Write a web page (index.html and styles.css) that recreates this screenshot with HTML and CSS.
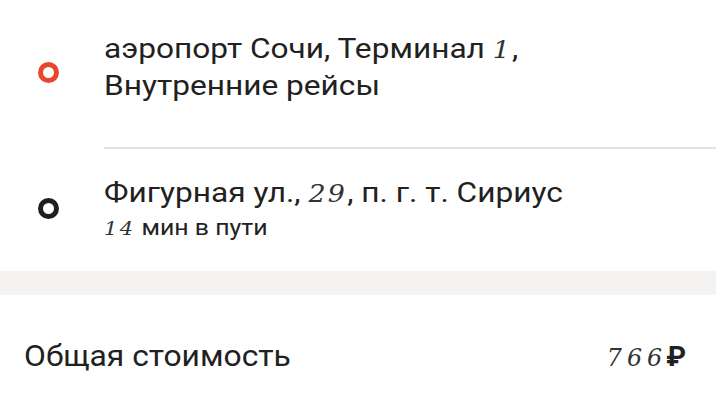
FILE: index.html
```html
<!DOCTYPE html>
<html lang="ru">
<head>
<meta charset="utf-8">
<link rel="stylesheet" href="styles.css">
</head>
<body>
<section class="route">
  <div class="point point-from">
    <div class="marker"><span class="ring ring-red"></span></div>
    <div class="addr">аэропорт Сочи, Терминал <span class="num">1</span>,<br>Внутренние рейсы</div>
  </div>
  <div class="divider"></div>
  <div class="point point-to">
    <div class="marker"><span class="ring ring-black"></span></div>
    <div class="info">
      <div class="addr">Фигурная ул., <span class="num">29</span>, п. г. т. Сириус</div>
      <div class="sub"><span class="num">14</span> мин в пути</div>
    </div>
  </div>
</section>
<div class="band"></div>
<section class="total">
  <div class="label">Общая стоимость</div>
  <div class="price"><span class="num price-num">766</span><span class="rub">₽</span></div>
</section>
</body>
</html>
```
FILE: styles.css
```css
html, body {
  margin: 0;
  padding: 0;
  background: #fff;
}
body {
  width: 716px;
  height: 409px;
  overflow: hidden;
  font-family: Roboto, "Liberation Sans", sans-serif;
  color: #212121;
}
.route {
  padding-top: 31px;
}
.point {
  display: flex;
}
.marker {
  width: 104px;
  flex: none;
  display: flex;
  justify-content: center;
  padding-right: 8px;
  box-sizing: border-box;
}
.ring {
  display: block;
  width: 21px;
  height: 21px;
  border-radius: 50%;
  box-sizing: border-box;
  border: 5.5px solid;
}
.ring-red {
  border-color: #e9452f;
  margin-top: 31px;
}
.ring-black {
  border-color: #1f1f1f;
  margin-top: 23px;
}
.addr {
  font-size: 28px;
  line-height: 36px;
  transform: scaleX(1.13);
  transform-origin: left center;
  white-space: nowrap;
}
.sub {
  font-size: 22px;
  line-height: 32px;
  transform: scaleX(1.13);
  transform-origin: left center;
}
.num {
  font-style: italic;
  font-weight: 300;
  font-family: "DejaVu Serif", serif;
  font-size: 0.85em;
  letter-spacing: 2px;
  color: #333;
}
.price-num {
  letter-spacing: 5px;
}
.divider {
  height: 2px;
  background: #e3e3e3;
  margin: 43px 0 0 104px;
}
.point-to {
  padding-top: 26px;
  padding-bottom: 26px;
}
.band {
  height: 24px;
  background: #f4f3f2;
}
.total {
  display: flex;
  justify-content: space-between;
  align-items: baseline;
  padding: 43px 30px 0 24px;
}
.label {
  font-size: 30px;
  line-height: 36px;
  transform: scaleX(1.06);
  transform-origin: left center;
}
.price {
  font-size: 28px;
  line-height: 36px;
}
.rub {
  font-weight: 700;
  margin-left: -1px;
}
```
